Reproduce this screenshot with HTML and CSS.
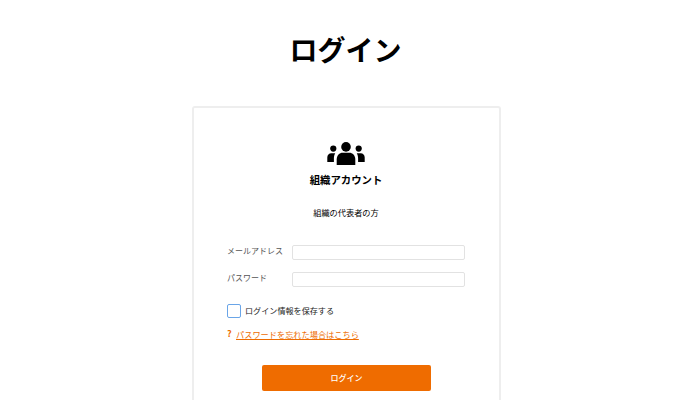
FILE: index.html
```html
<!DOCTYPE html>
<html lang="ja">
<head>
<meta charset="utf-8">
<title>ログイン</title>
<link rel="stylesheet" href="styles.css">
</head>
<body>
<h1 class="page-title">ログイン</h1>
<main class="card">
  <svg class="org-icon" width="38" height="24" viewBox="0 0 38 24" aria-hidden="true">
    <circle cx="19" cy="4.900" r="4.800"/>
    <path d="M9.700 23v-5.500c0-4 2.800-6.700 6-6.700h6.600c3.200 0 6 2.700 6 6.700v5.500z"/>
    <circle cx="6.300" cy="6.600" r="3.100"/>
    <circle cx="31.700" cy="6.600" r="3.100"/>
    <path d="M.3 20v-4.500c0-2.600 1.700-4.300 4-4.300h3.900c-.9 1.500-1.300 3.400-1.300 5.500v3.300z"/>
    <path d="M37.700 20v-4.500c0-2.600-1.700-4.300-4-4.300h-3.900c.9 1.500 1.300 3.400 1.300 5.500v3.300z"/>
  </svg>
  <h2 class="org-title">組織アカウント</h2>
  <p class="org-sub">組織の代表者の方</p>
  <form class="form">
    <div class="field">
      <label class="field-label" for="mail">メールアドレス</label>
      <input class="field-input" id="mail" type="text">
    </div>
    <div class="field">
      <label class="field-label" for="pass">パスワード</label>
      <input class="field-input" id="pass" type="password">
    </div>
    <div class="remember">
      <span class="check"></span>
      <span class="remember-text">ログイン情報を保存する</span>
    </div>
    <div class="forgot">
      <span class="forgot-mark">?</span>
      <a class="forgot-link" href="#">パスワードを忘れた場合はこちら</a>
    </div>
    <button class="submit" type="button">ログイン</button>
  </form>
</main>
</body>
</html>
```
FILE: styles.css
```css
* { box-sizing: border-box; }
html, body { margin: 0; height: 400px; overflow: hidden; background: #fff; }
body {
  font-family: "Noto Sans CJK JP", "Liberation Sans", sans-serif;
  color: #000;
  padding-left: 13px;
  display: flex;
  flex-direction: column;
  align-items: center;
}
.page-title {
  flex: none;
  margin: 28px 0 0;
  font-size: 28px;
  line-height: 42px;
  font-weight: 700;
  height: 78px;
  position: relative;
  left: -1px;
}
.card {
  width: 309px;
  flex: 1;
  min-height: 0;
  border: 2px solid #eeeeee;
  border-bottom: 0;
  border-radius: 3px 3px 0 0;
  padding: 34px 34px 0 33px;
  display: flex;
  flex-direction: column;
  align-items: center;
}
.org-icon { display: block; fill: #000; flex: none; }
.org-title {
  margin: 6px 0 0;
  font-size: 10.4px;
  line-height: 16px;
  font-weight: 700;
}
.org-sub {
  margin: 17px 0 0;
  font-size: 8.2px;
  line-height: 14px;
}
.form { width: 100%; margin-top: 26px; display: flex; flex-direction: column; }
.field { display: flex; align-items: flex-start; height: 15px; margin-bottom: 12px; }
.field-label {
  width: 65px;
  font-size: 8px;
  line-height: 11px;
  color: #555;
  flex: none;
}
.field-input {
  width: 173px;
  height: 15px;
  border: 1px solid #e2e2e2;
  border-radius: 2px;
  background: #fff;
  padding: 0;
}
.remember { display: flex; align-items: center; margin-top: 5px; }
.check {
  width: 14px;
  height: 14px;
  border: 1.500px solid #6aa5e8;
  border-radius: 2px;
  flex: none;
}
.remember-text { margin-left: 4px; font-size: 8.1px; line-height: 14px; color: #222; }
.forgot { display: flex; align-items: center; margin-top: 9px; }
.forgot-mark { width: 9px; font-size: 9px; line-height: 14px; font-weight: 700; color: #ee6c00; }
.forgot-link { font-size: 8.2px; line-height: 14px; color: #ee6c00; text-decoration: underline; }
.submit {
  align-self: center;
  margin: 24px 0 0 1px;
  width: 169px;
  height: 26px;
  border: 0;
  border-radius: 2px;
  background: #ef6c00;
  color: #fff;
  font-family: inherit;
  font-size: 8px;
  font-weight: 500;
  padding: 0 0 1px;
}
```
